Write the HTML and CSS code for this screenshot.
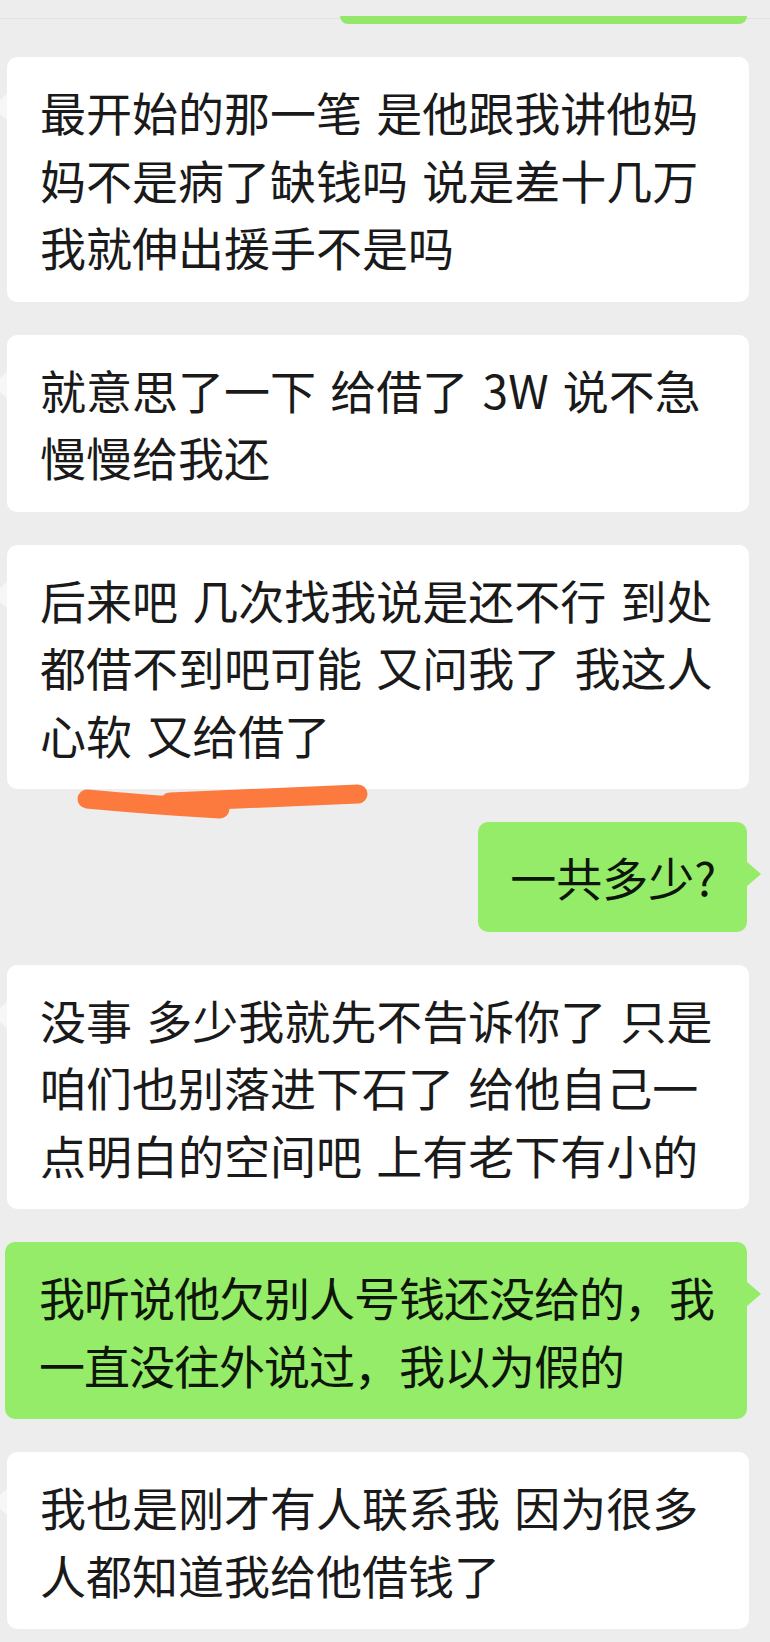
FILE: index.html
```html
<!DOCTYPE html>
<html lang="zh-CN">
<head>
    <meta charset="UTF-8">
    <meta name="viewport" content="width=device-width, initial-scale=1.0">
    <title>聊天记录</title>
    <link rel="stylesheet" href="styles.css">
</head>
<body>
    <div class="top">
        <div class="top-bubble"></div>
    </div>
    <div class="chat">
        <div class="row them">
            <div class="bubble">
                <p class="text">最开始的那一笔 是他跟我讲他妈<br>妈不是病了缺钱吗 说是差十几万<br>我就伸出援手不是吗</p>
            </div>
        </div>
        <div class="row them">
            <div class="bubble">
                <p class="text">就意思了一下 给借了 3W 说不急<br>慢慢给我还</p>
            </div>
        </div>
        <div class="row them">
            <div class="bubble">
                <p class="text">后来吧 几次找我说是还不行 到处<br>都借不到吧可能 又问我了 我这人<br>心软 又给借了</p>
            </div>
            <!-- orange marker stroke drawn over the bubble -->
            <svg class="mark" width="310" height="45" viewBox="0 0 310 45">
                <path d="M17 19 Q 80 25 150 29" />
                <path d="M100 22 L 288 14" />
            </svg>
        </div>
        <div class="row me">
            <div class="bubble green">
                <p class="text">一共多少?</p>
            </div>
        </div>
        <div class="row them">
            <div class="bubble">
                <p class="text">没事 多少我就先不告诉你了 只是<br>咱们也别落进下石了 给他自己一<br>点明白的空间吧 上有老下有小的</p>
            </div>
        </div>
        <div class="row me wide">
            <div class="bubble green">
                <p class="text">我听说他欠别人号钱还没给的，我<br>一直没往外说过，我以为假的</p>
            </div>
        </div>
        <div class="row them">
            <div class="bubble">
                <p class="text">我也是刚才有人联系我 因为很多<br>人都知道我给他借钱了</p>
            </div>
        </div>
    </div>
</body>
</html>
```

FILE: styles.css
```css
body {
    margin: 0;
    background-color: #ededed;
    font-family: "Noto Sans CJK SC", "Noto Sans", sans-serif;
    color: #1a1a1a;
}

.top {
    height: 24px;
    /* faint line under the header */
    background: linear-gradient(to bottom, transparent 18px, #e2e2e2 18px, #e2e2e2 19px, transparent 19px);
}

.top-bubble {
    margin: 0 23px 0 340px;
    position: relative;
    top: 16px;
    height: 8px;
    background-color: #95e76c;
    border-radius: 0 0 10px 10px;
}

.chat {
    display: flex;
    flex-direction: column;
    gap: 33px;
    padding-top: 33px;
}

.row {
    display: flex;
    position: relative;
}

.row.them {
    padding: 0 21px 0 7px;
}

.row.me {
    justify-content: flex-end;
    padding: 0 23px 0 5px;
}

.bubble {
    position: relative;
    background-color: #fff;
    border-radius: 10px;
    padding: 21px 33px;
    flex: 1;
    min-width: 0;
}

.row.me .bubble {
    flex: none;
    padding: 21px 31px 21px 32px;
}

.row.me.wide .bubble {
    flex: 1;
    padding: 21px 34px;
}

.row.me.wide .text {
    letter-spacing: -1px;
}

/* left tail, mostly cut off by the screen edge */
.row.them .bubble::before {
    content: "";
    position: absolute;
    left: -15px;
    top: 37px;
    border-top: 13px solid transparent;
    border-bottom: 13px solid transparent;
    border-right: 15px solid #f7f7f7;
}

.bubble.green {
    background-color: #95ec69;
    color: #0e1609;
}

.bubble.green::after {
    content: "";
    position: absolute;
    right: -14px;
    top: 39px;
    border-top: 13px solid transparent;
    border-bottom: 13px solid transparent;
    border-left: 15px solid #95ec69;
}

.text {
    margin: 0;
    font-size: 46px;
    line-height: 67.5px;
    word-spacing: 4px;
    white-space: nowrap;
}

.mark {
    position: absolute;
    left: 70px;
    top: 235px;
    fill: none;
    stroke: #fd7a3e;
    stroke-width: 19;
    stroke-linecap: round;
}
```
